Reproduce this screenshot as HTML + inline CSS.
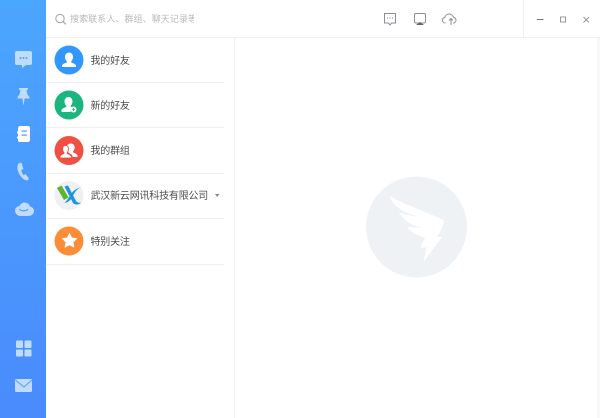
<!DOCTYPE html>
<html>
<head>
<meta charset="utf-8">
<style>
html,body{margin:0;padding:0;width:600px;height:418px;overflow:hidden;background:#fff;font-family:"Liberation Sans","Noto Sans CJK SC",sans-serif}
#side{position:absolute;left:0;top:0;width:46px;height:418px;background:linear-gradient(#4ba6fd,#4a8bfd)}
svg{position:absolute;left:0;top:0}
.t{position:absolute;left:90.5px;font-size:10px;letter-spacing:-.2px;color:#4c4c4c;line-height:14px;white-space:nowrap}
.l{position:absolute;left:47px;width:177px;height:1px;background:#eeeeee}
#s{position:absolute;left:70px;top:13px;width:123.5px;overflow:hidden;white-space:nowrap;font-size:9px;letter-spacing:.08px;line-height:13px;color:#b8b8b8}
</style>
</head>
<body>
<div id="side"></div>
<div style="position:absolute;left:46px;top:37px;width:554px;height:1px;background:#f0f0f0"></div>
<div style="position:absolute;left:234px;top:38px;width:1px;height:380px;background:#f0f0f0"></div>
<div style="position:absolute;left:523px;top:0;width:1px;height:37px;background:#f0f0f0"></div>
<div style="position:absolute;left:597px;top:38px;width:3px;height:380px;background:#f8f8f8"></div>
<div class="l" style="top:82px"></div>
<div class="l" style="top:127px"></div>
<div class="l" style="top:173px"></div>
<div class="l" style="top:218px"></div>
<div class="l" style="top:264px"></div>
<div id="s">搜索联系人、群组、聊天记录等</div>
<div class="t" style="top:55px">我的好友</div>
<div class="t" style="top:100px">新的好友</div>
<div class="t" style="top:145px">我的群组</div>
<div class="t" style="top:190px">武汉新云网讯科技有限公司</div>
<div class="t" style="top:236px">特别关注</div>
<svg width="600" height="418" viewBox="0 0 600 418">
<!-- sidebar -->
<g fill="#bfdcfd">
<path d="M17 51h13a2 2 0 0 1 2 2v10a2 2 0 0 1-2 2h-4l-4 3v-3h-5a2 2 0 0 1-2-2V53a2 2 0 0 1 2-2z"/>
<path d="M19 88h9v1.500l-1.500 1 1 4 2 2.500v1.500h-5l-.7 6h-.6l-.7-6h-5v-1.500l2-2.500 1-4-1.500-1z"/>
<path transform="translate(0,-13)" d="M18.500 177c-1.500 3-1 6 .5 9s4 6 7 7c1.500.2 2.500-.5 2.500-1.500l-3-4-2 1c-1.300-1.500-2.300-3.500-2.500-5.500l2-1-1.500-5.500c-1-.7-2.300-.5-3 .5z" stroke="#bfdcfd" stroke-width=".6"/>
<path d="M21 216c-3.500 0-6-2.500-6-5.300 0-2.500 2-4.500 4.500-4.700 1-2.300 3-3.500 5-3.500 3 0 5 1.800 5.700 4.300 2.200.3 3.800 2 3.800 4.200 0 2.800-2.500 5-5.500 5z"/>
<rect x="16" y="340.500" width="7" height="7.500" rx="1"/>
<rect x="24.500" y="340.500" width="7" height="7.500" rx="1"/>
<rect x="16" y="349.500" width="7" height="7" rx="1"/>
<rect x="24.500" y="349.500" width="7" height="7" rx="1"/>
<rect x="15" y="379" width="17" height="13" rx="1"/>
</g>
<path d="M15.500 380l8.500 7 8-7" fill="none" stroke="#5c98f4" stroke-width="1"/>
<g fill="#4ba0fd"><circle cx="20.500" cy="58" r="1"/><circle cx="23.500" cy="58" r="1"/><circle cx="26.500" cy="58" r="1"/></g>
<path d="M19.500 209c1.500 2.500 7 2.500 8.500 0" fill="none" stroke="#4b9cfd" stroke-width="1.200"/>
<path d="M19.500 126H28a2 2 0 0 1 2 2v12a2 2 0 0 1-2 2h-8.500a1.500 1.500 0 0 1-1.500-1.500v-2h-1v-2h1v-3h-1v-2h1v-3a2.500 2.500 0 0 1 1.500-2.500z" fill="#fff"/>
<rect x="21.500" y="130.500" width="5.500" height="1.200" fill="#4b9cfd"/><rect x="21.500" y="134.500" width="5.500" height="1.200" fill="#4b9cfd"/>

<!-- search -->
<circle cx="60" cy="18.500" r="4.200" fill="none" stroke="#a8a8a8" stroke-width="1.100"/>
<path d="M63 21.500l2.800 2.800" stroke="#a8a8a8" stroke-width="1.300"/>

<!-- top icons -->
<g fill="none" stroke="#8a8f94" stroke-width="1">
<path d="M384.500 13.500h11v9.500h-4l-1.500 2-1.500-2h-4z"/>
<rect x="414.500" y="13.500" width="11" height="9.500" rx="1.500"/>
<path d="M445.500 23c-1.800 0-3-1.200-3-2.800 0-1.400 1-2.500 2.300-2.700.5-2 2.200-3.500 4.200-3.500 2.200 0 4 1.400 4.500 3.500 1.500.2 2.500 1.300 2.500 2.700 0 1.600-1.300 2.800-3 2.800"/>
<path d="M451 25v-6M449 20.500l2-2 2 2"/>
<path d="M537 19.500h6.500" stroke="#777"/>
<rect x="560.500" y="17" width="5" height="5" stroke="#999"/>
<path d="M583.500 17l5.500 5.500M589 17l-5.500 5.500" stroke="#999"/>
</g>
<g fill="#8a8f94"><circle cx="387.500" cy="18" r=".6"/><circle cx="390" cy="18" r=".6"/><circle cx="392.500" cy="18" r=".6"/></g>
<path d="M416 25h8l-4-3z" fill="#666"/>

<!-- avatars -->
<circle cx="69" cy="60" r="14.500" fill="#3296fa"/>
<path d="M69 52.500c2.500 0 4 2 4 4.500 0 1.800-.8 3.300-1.800 4.300v1.200c2 .8 4.800 1.500 4.800 3.500v1H62v-1c0-2 2.800-2.700 4.800-3.500v-1.200c-1-1-1.800-2.500-1.800-4.300 0-2.500 1.500-4.500 4-4.500z" fill="#fff"/>
<circle cx="69" cy="105" r="14.500" fill="#1cb47f"/>
<path d="M68.500 97c2.500 0 4 2 4 4.500 0 1.800-.8 3.300-1.800 4.300v1c.5.200 1 .4 1.500.7a4.500 4.500 0 0 0-1.500 4.500H61.500v-1.300c0-2.100 2.800-3 4.800-3.700v-1.200c-1-1-1.800-2.500-1.800-4.300 0-2.500 1.500-4.500 4-4.500z" fill="#fff"/>
<circle cx="73.500" cy="109.500" r="3" fill="#fff"/>
<path d="M73.500 108v3M72 109.500h3" stroke="#1cb47f" stroke-width=".8"/>
<circle cx="69" cy="150.500" r="14.500" fill="#f04f43"/>
<path d="M71 143.500c2.300 0 3.700 1.800 3.700 4 0 1.600-.7 3-1.600 3.800v1.200c1.800.7 4.400 1.500 4.400 3.500v1H72.500v-.5c0-1.800-2-2.800-4-3.700v-1.500c-1-1-1.500-2.500-1.500-4.300 0-2 1.500-3.500 4-3.500z" fill="#fff"/>
<path d="M65.500 145.500c2 0 3 1.500 3 3.500 0 1.500-.5 2.700-1.300 3.500v1c1.700.7 4.300 1.700 4.300 3.500v1H60v-1.200c0-1.800 2.300-2.600 4-3.300v-1c-.8-.8-1.300-2-1.300-3.500 0-2 1-3.500 2.800-3.500z" fill="#fff" stroke="#f04f43" stroke-width=".8"/>
<circle cx="69" cy="195.500" r="14.500" fill="#eef0f1"/>
<path d="M57 188l4.500-2.500 7 12-4.500 2.500z" fill="#5cb531"/>
<path d="M64.500 186.500l3.500-1 8 15.500c1.500 1.800 3 2 5 1.500-2 2.500-6 2.500-8 .5z" fill="#1f94d8"/>
<path d="M81 187.500c-4 .5-7.500 3-9.500 6l-4 6c-1 1.500-2 2.500-3 3.500 3-.5 5-2 6.500-4l3.500-6c1.500-2.500 3.500-4.500 6.500-5.500z" fill="#1f94d8"/>
<circle cx="69" cy="241" r="14.500" fill="#fb8d38"/>
<path d="M69.500 233l2.300 4.800 5.200.7-3.800 3.700.9 5.200-4.600-2.500-4.600 2.500.9-5.200-3.800-3.700 5.200-.7z" fill="#fff" stroke="#fff" stroke-width=".5" stroke-linejoin="round"/>
<path d="M215 194h4.500l-2.250 3z" fill="#888"/>

<!-- main logo -->
<circle cx="416.500" cy="227" r="50.500" fill="#eff2f5"/>
<path d="M390 196.500c17 9 36 15.500 53.500 23.500 .5 6-3.500 12.500-6.500 17h5l-18.500 25 3-14.500h-6l4.500-10c-8-1.500-15-6-17.500-10.500 5 .5 11 .5 15 .5-10-2-18.500-6-23-14.500 5 1.500 11.500 3 18 3.500-13-4-24-9-27.500-20z" fill="#fff"/>
</svg>
</body>
</html>
